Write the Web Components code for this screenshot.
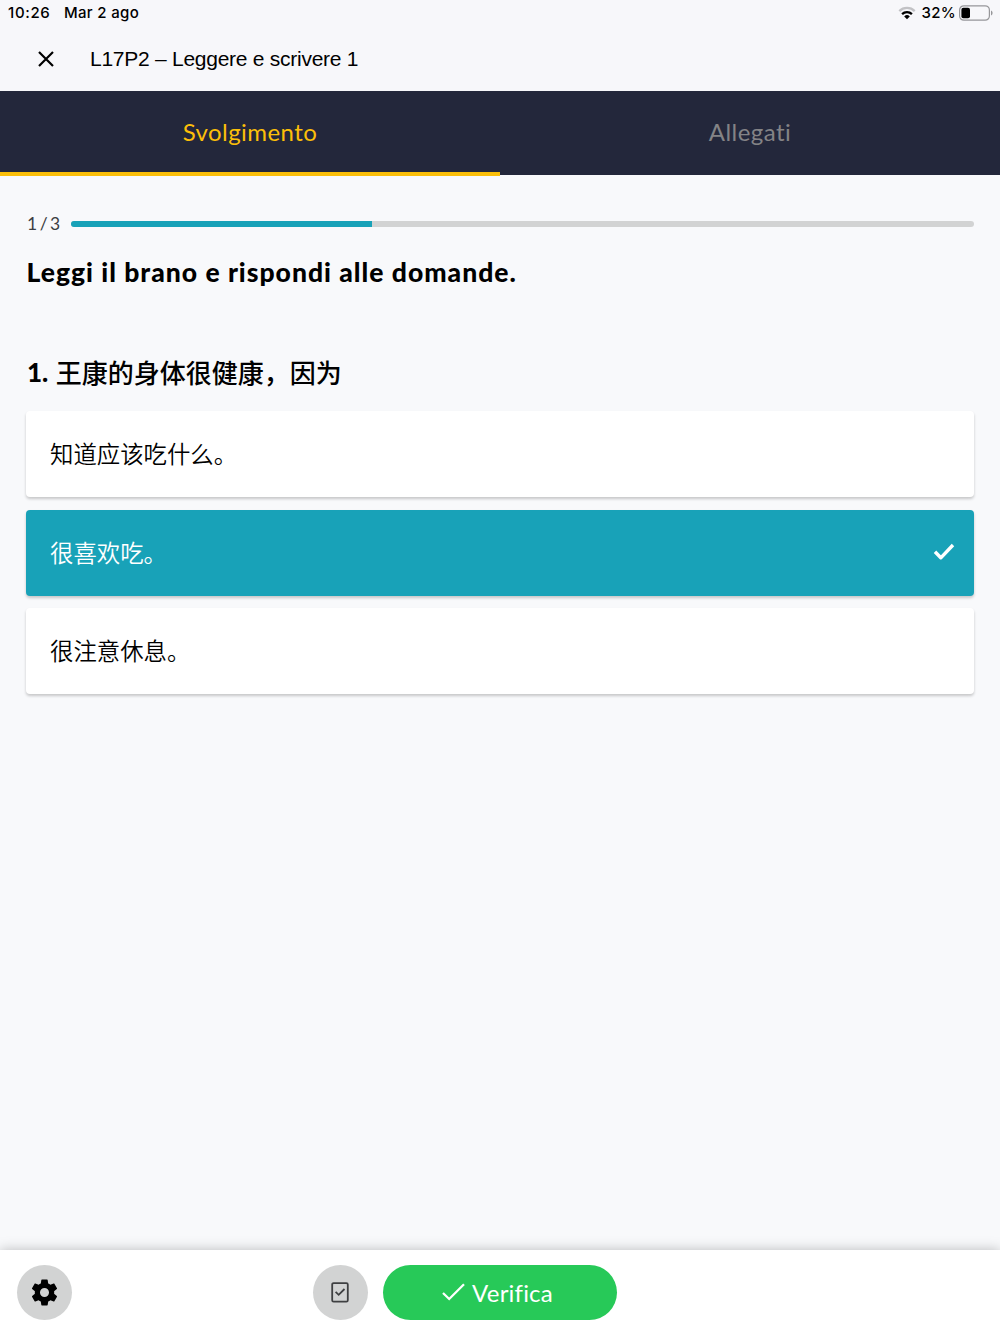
<!DOCTYPE html>
<html lang="it">
<head>
<meta charset="utf-8">
<meta name="viewport" content="width=device-width, initial-scale=1">
<title>L17P2 – Leggere e scrivere 1</title>
<style>
    html, body {
        margin: 0;
        height: 100%;
    }
    body {
        --teal: #18a2b8;
        --yellow: #fbbf09;
        --navy: #23273b;
        --green: #27c958;
        --grey: #d2d3d3;
        font-family: Lato, "Noto Sans CJK SC", sans-serif;
        color: #000;
        background: #f8f9fb;
        overflow: hidden;
    }
</style>
</head>
<body>
<exercise-app></exercise-app>

<script>
class StatusBar extends HTMLElement {
    constructor() {
        super();
        this.attachShadow({ mode: 'open' });
    }

    connectedCallback() {
        this.shadowRoot.innerHTML = `
            <style>
                :host {
                    display: flex;
                    justify-content: space-between;
                    align-items: center;
                    box-sizing: border-box;
                    height: 26px;
                    padding: 0 7px 0 8px;
                    font: 500 15px/26px Inter, sans-serif;
                }
                div { display: flex; align-items: center; }
                .time { letter-spacing: 0.65px; margin-right: 13.5px; }
                .date { letter-spacing: 0.35px; }
                .wifi { margin-right: 6px; }
                .pct { margin-right: 3px; letter-spacing: 0.3px; }
                svg { display: block; }
            </style>
            <div><span class="time">${this.getAttribute('time')}</span><span class="date">${this.getAttribute('date')}</span></div>
            <div>
                <svg class="wifi" width="18" height="14" viewBox="0 0 18 14" fill="none" stroke-width="2.3">
                    <path d="M1.3 5.1a11 11 0 0 1 15.4 0" stroke="#c2c2c5"/>
                    <path d="M4.1 8.1a7 7 0 0 1 9.8 0" stroke="#000"/>
                    <path d="M9 13.2 6.2 10.4a4 4 0 0 1 5.6 0z" fill="#000"/>
                </svg>
                <span class="pct">${this.getAttribute('battery')}%</span>
                <svg width="34" height="16" viewBox="0 0 34 16">
                    <rect x=".6" y=".8" width="29.8" height="14.4" rx="4.2" fill="none" stroke="#97979a" stroke-width="1.2"/>
                    <rect x="2.4" y="2.7" width="8.6" height="10.6" rx="2" fill="#000"/>
                    <path d="M32 5.5c2.1.9 2.1 4.1 0 5z" fill="#97979a"/>
                </svg>
            </div>
        `;
    }
}

class PageHeader extends HTMLElement {
    constructor() {
        super();
        this.attachShadow({ mode: 'open' });
    }

    connectedCallback() {
        this.shadowRoot.innerHTML = `
            <style>
                :host {
                    display: flex;
                    align-items: center;
                    box-sizing: border-box;
                    height: 65px;
                    padding-left: 38px;
                    gap: 36px;
                    font: 21px/65px "Liberation Sans", Arial, sans-serif;
                    letter-spacing: -0.26px;
                }
                svg { display: block; }
            </style>
            <svg width="16" height="16" viewBox="0 0 16 16" stroke="#000" stroke-width="2.2">
                <path d="M1 1 15 15M15 1 1 15"/>
            </svg>
            <span><slot></slot></span>
        `;
    }
}

class TabBar extends HTMLElement {
    constructor() {
        super();
        this.attachShadow({ mode: 'open' });
    }

    connectedCallback() {
        this.shadowRoot.innerHTML = `
            <style>
                :host {
                    display: grid;
                    grid-template-columns: 1fr 1fr;
                    height: 84px;
                    background: var(--navy);
                }
            </style>
            <slot></slot>
        `;
    }
}

class TabItem extends HTMLElement {
    constructor() {
        super();
        this.attachShadow({ mode: 'open' });
    }

    connectedCallback() {
        this.shadowRoot.innerHTML = `
            <style>
                :host {
                    box-sizing: border-box;
                    display: block;
                    height: 84px;
                    text-align: center;
                    font-size: 24px;
                    line-height: 82px;
                    letter-spacing: 0.45px;
                    color: #838386;
                }
                :host([active]) {
                    height: 85px;
                    color: var(--yellow);
                    border-bottom: 4px solid var(--yellow);
                }
            </style>
            <slot></slot>
        `;
    }
}

class StepProgress extends HTMLElement {
    constructor() {
        super();
        this.attachShadow({ mode: 'open' });
    }

    connectedCallback() {
        const step = Number(this.getAttribute('step'));
        const total = Number(this.getAttribute('total'));
        this.shadowRoot.innerHTML = `
            <style>
                :host {
                    display: flex;
                    align-items: center;
                    height: 24px;
                    font-size: 17.5px;
                    line-height: 24px;
                    word-spacing: -2px;
                    color: #3c3d42;
                }
                .label { width: 44.5px; padding-left: 1px; box-sizing: border-box; white-space: nowrap; }
                .track {
                    flex: 1;
                    height: 6px;
                    border-radius: 3px;
                    background: var(--grey);
                    overflow: hidden;
                }
                .fill {
                    width: ${step / total * 100}%;
                    height: 100%;
                    background: var(--teal);
                }
            </style>
            <span class="label">${step} / ${total}</span>
            <div class="track"><div class="fill"></div></div>
        `;
    }
}

class AnswerOption extends HTMLElement {
    constructor() {
        super();
        this.attachShadow({ mode: 'open' });
    }

    connectedCallback() {
        const check = `
            <svg width="22" height="18" viewBox="0 0 22 18" fill="none" stroke="#fff" stroke-width="3.4" stroke-linejoin="round">
                <path d="M2 8.8 7.8 14.8 20 2"/>
            </svg>
        `;
        this.shadowRoot.innerHTML = `
            <style>
                :host {
                    display: flex;
                    align-items: center;
                    justify-content: space-between;
                    box-sizing: border-box;
                    height: 86px;
                    padding: 0 19px 2px 24px;
                    border-radius: 4px;
                    background: #fff;
                    box-shadow: 0 2px 3px rgba(0, 0, 0, 0.2);
                    font: 350 23.4px/84px "Noto Sans CJK SC", sans-serif;
                }
                :host([selected]) {
                    background: var(--teal);
                    color: #fff;
                }
            </style>
            <span><slot></slot></span>
            ${this.hasAttribute('selected') ? check : ''}
        `;
    }
}

class RoundButton extends HTMLElement {
    constructor() {
        super();
        this.attachShadow({ mode: 'open' });
    }

    connectedCallback() {
        this.shadowRoot.innerHTML = `
            <style>
                :host {
                    display: flex;
                    align-items: center;
                    justify-content: center;
                    width: 55px;
                    height: 55px;
                    border-radius: 50%;
                    background: var(--grey);
                }
            </style>
            <slot></slot>
        `;
    }
}

class VerifyButton extends HTMLElement {
    constructor() {
        super();
        this.attachShadow({ mode: 'open' });
    }

    connectedCallback() {
        this.shadowRoot.innerHTML = `
            <style>
                :host {
                    display: flex;
                    align-items: center;
                    justify-content: center;
                    gap: 7px;
                    box-sizing: border-box;
                    width: 234px;
                    height: 55px;
                    padding-right: 5px;
                    border-radius: 28px;
                    background: var(--green);
                    color: #fff;
                    font-size: 24px;
                    line-height: 55px;
                    letter-spacing: 0.2px;
                }
            </style>
            <svg width="23" height="18" viewBox="0 0 23 18" fill="none" stroke="#fff" stroke-width="2.3">
                <path d="M1 10 7.2 16 22 1.2"/>
            </svg>
            <span><slot></slot></span>
        `;
    }
}

class ActionBar extends HTMLElement {
    constructor() {
        super();
        this.attachShadow({ mode: 'open' });
    }

    connectedCallback() {
        this.shadowRoot.innerHTML = `
            <style>
                :host {
                    display: grid;
                    grid-template-columns: 295.5px auto 1fr;
                    align-items: center;
                    box-sizing: border-box;
                    height: 84px;
                    padding-left: 17px;
                    background: #fff;
                    box-shadow: 0 0 12px rgba(0, 0, 0, 0.25);
                }
                .main { display: flex; gap: 15.5px; }
                svg { display: block; }
            </style>
            <round-button>
                <svg width="31" height="31" viewBox="0 0 24 24">
                    <path d="M19.43 12.98c.04-.32.07-.64.07-.98s-.03-.66-.07-.98l2.11-1.65c.19-.15.24-.42.12-.64l-2-3.46c-.12-.22-.39-.3-.61-.22l-2.49 1c-.52-.4-1.08-.73-1.69-.98l-.38-2.65C14.46 2.18 14.25 2 14 2h-4c-.25 0-.46.18-.49.42l-.38 2.65c-.61.25-1.17.59-1.69.98l-2.49-1c-.23-.09-.49 0-.61.22l-2 3.46c-.13.22-.07.49.12.64l2.11 1.65c-.04.32-.07.65-.07.98s.03.66.07.98l-2.11 1.65c-.19.15-.24.42-.12.64l2 3.46c.12.22.39.3.61.22l2.49-1c.52.4 1.08.73 1.69.98l.38 2.65c.03.24.24.42.49.42h4c.25 0 .46-.18.49-.42l.38-2.65c.61-.25 1.17-.59 1.69-.98l2.49 1c.23.09.49 0 .61-.22l2-3.46c.12-.22.07-.49-.12-.64zM12 15.5a3.5 3.5 0 1 1 0-7 3.5 3.5 0 0 1 0 7z"/>
                </svg>
            </round-button>
            <div class="main">
                <round-button>
                    <svg width="18" height="21" viewBox="0 0 18 21" fill="none" stroke="#3f4042" stroke-width="1.8">
                        <rect x="1.2" y="1.1" width="15.6" height="18.6" rx="1.4"/>
                        <path d="M4.6 9.8 7.7 12.8 13.5 7"/>
                    </svg>
                </round-button>
                <verify-button>Verifica</verify-button>
            </div>
        `;
    }
}

class ExerciseApp extends HTMLElement {
    constructor() {
        super();
        this.attachShadow({ mode: 'open' });
    }

    connectedCallback() {
        this.shadowRoot.innerHTML = `
            <style>
                :host {
                    display: flex;
                    flex-direction: column;
                    height: 100vh;
                }
                .top { background: #f7f7fa; }
                main {
                    flex: 1;
                    padding: 37px 26px 0;
                }
                h1, h2 { margin: 0; font-weight: 900; }
                h1 {
                    margin-top: 16px;
                    padding-left: 0.5px;
                    font-size: 26.5px;
                    line-height: 40px;
                    letter-spacing: 1px;
                    white-space: nowrap;
                }
                h2 {
                    margin-top: 60px;
                    padding-left: 1px;
                    font-size: 26px;
                    line-height: 40px;
                    display: flex;
                    gap: 7.5px;
                }
                h2 .text { font-family: "Noto Sans CJK SC", sans-serif; font-weight: 500; }
                .options {
                    display: grid;
                    gap: 12.75px;
                    margin-top: 18.75px;
                }
            </style>
            <div class="top">
                <status-bar time="10:26" date="Mar 2 ago" battery="32"></status-bar>
                <page-header>L17P2 – Leggere e scrivere 1</page-header>
            </div>
            <tab-bar>
                <tab-item active>Svolgimento</tab-item>
                <tab-item>Allegati</tab-item>
            </tab-bar>
            <main>
                <step-progress step="1" total="3"></step-progress>
                <h1>Leggi il brano e rispondi alle domande.</h1>
                <h2><span>1.</span><span class="text">王康的身体很健康，因为</span></h2>
                <div class="options">
                    <answer-option>知道应该吃什么。</answer-option>
                    <answer-option selected>很喜欢吃。</answer-option>
                    <answer-option>很注意休息。</answer-option>
                </div>
            </main>
            <action-bar></action-bar>
        `;
    }
}

customElements.define('status-bar', StatusBar);
customElements.define('page-header', PageHeader);
customElements.define('tab-bar', TabBar);
customElements.define('tab-item', TabItem);
customElements.define('step-progress', StepProgress);
customElements.define('answer-option', AnswerOption);
customElements.define('round-button', RoundButton);
customElements.define('verify-button', VerifyButton);
customElements.define('action-bar', ActionBar);
customElements.define('exercise-app', ExerciseApp);
</script>
</body>
</html>
